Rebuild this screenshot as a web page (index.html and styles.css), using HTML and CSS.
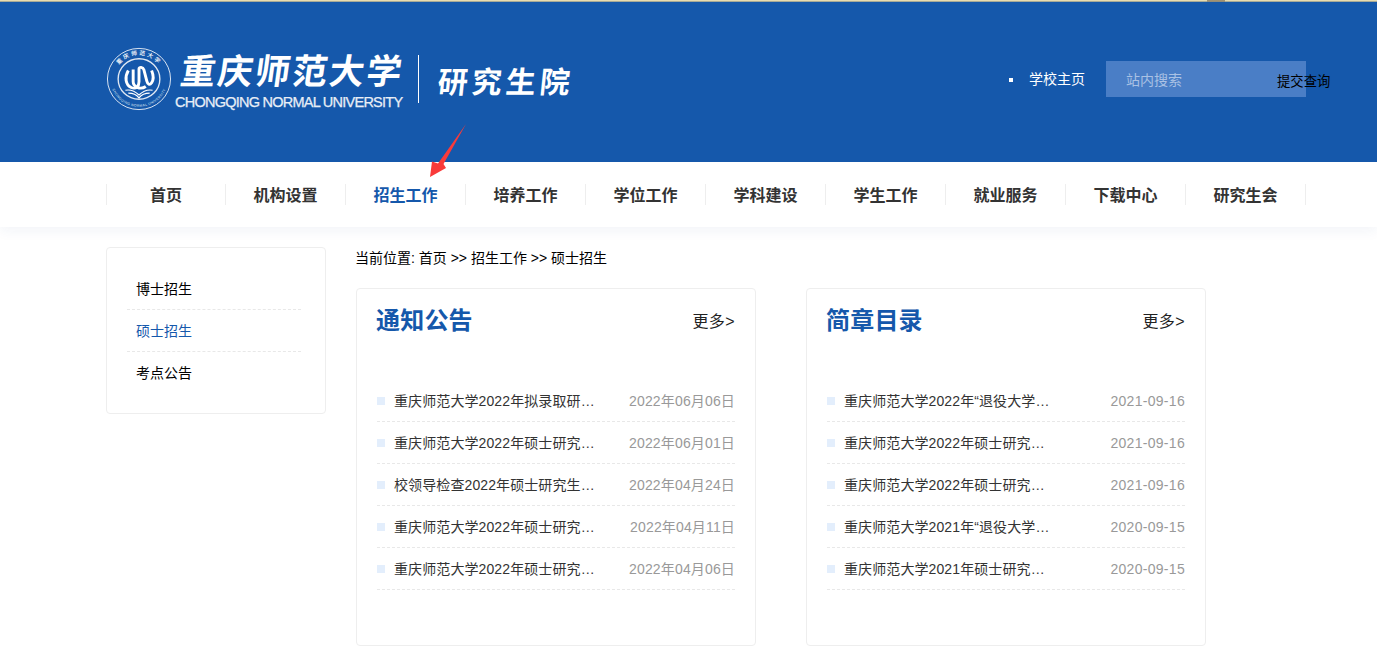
FILE: index.html
```html
<!DOCTYPE html>
<html lang="zh-CN">
<head>
<meta charset="utf-8">
<title>重庆师范大学研究生院</title>
<link rel="stylesheet" href="styles.css">
</head>
<body>
<header class="header">
  <div class="topstrip"></div>
  <div class="header-inner">
    <div class="logo">
      <svg class="seal" width="66" height="64" viewBox="0 0 68 68" preserveAspectRatio="none" fill="none" stroke="#dfe8f3">
        <defs>
          <path id="sealTop" d="M8.500 34a25.500 25.500 0 0 1 51 0"/>
          <path id="sealBottom" d="M4.500 34a29.500 29.500 0 0 0 59 0"/>
        </defs>
        <circle cx="34" cy="34" r="32.500" stroke-width="1"/>
        <circle cx="34" cy="34" r="21.500" stroke-width="1.400"/>
        <text class="seal-cn"><textPath href="#sealTop" startOffset="50%">重庆师范大学</textPath></text>
        <text class="seal-en"><textPath href="#sealBottom" startOffset="50%">CHONGQING NORMAL UNIVERSITY</textPath></text>
        <path d="M23 25c-4 7-3 15 3 18 5 2 8-1 8-6V23c0-2 4-2 5 1l3 12c1 4 3 5 5 2 2-3 2-8 0-13" stroke="#fff" stroke-width="3"/>
        <path d="M28 24v13c0 5 7 9 13 5" stroke="#fff" stroke-width="3"/>
        <path d="M20 46c5-1 10 1 14 5 4-4 9-6 14-5M23 49c4 0 8 1 11 5 3-4 7-5 11-5" stroke="#fff" stroke-width="1.200"/>
      </svg>
      <div class="logo-name">
        <div class="logo-cn">重庆师范大学</div>
        <div class="logo-en">CHONGQING NORMAL UNIVERSITY</div>
      </div>
      <div class="logo-rule"></div>
      <div class="logo-dept">研究生院</div>
    </div>
    <div class="tools">
      <span class="bullet"></span>
      <a class="home-link">学校主页</a>
      <form class="search">
        <span class="search-hint">站内搜索</span>
        <span class="search-btn">提交查询</span>
      </form>
    </div>
  </div>
  <svg class="arrow" width="38" height="54" viewBox="0 0 38 54"><path d="M37 0 L14.500 40 L17 44 L1 53 L3 37.500 L9 39.500 Z" fill="#f93a3a"/></svg>
</header>

<nav class="nav">
  <ul class="nav-list">
    <li class="nav-item">首页</li>
    <li class="nav-item">机构设置</li>
    <li class="nav-item active">招生工作</li>
    <li class="nav-item">培养工作</li>
    <li class="nav-item">学位工作</li>
    <li class="nav-item">学科建设</li>
    <li class="nav-item">学生工作</li>
    <li class="nav-item">就业服务</li>
    <li class="nav-item">下载中心</li>
    <li class="nav-item">研究生会</li>
  </ul>
</nav>

<main class="main">
  <aside class="side">
    <ul class="side-list">
      <li class="side-item">博士招生</li>
      <li class="side-item current">硕士招生</li>
      <li class="side-item last">考点公告</li>
    </ul>
  </aside>
  <section class="content">
    <div class="crumb">当前位置: 首页 &gt;&gt; 招生工作 &gt;&gt; 硕士招生</div>
    <div class="cards">
      <article class="card">
        <div class="card-head"><h2 class="card-title">通知公告</h2><a class="more">更多&gt;</a></div>
        <ul class="news">
          <li class="news-row"><span class="news-title">重庆师范大学2022年拟录取研究生名单公示</span><span class="news-date">2022年06月06日</span></li>
          <li class="news-row"><span class="news-title">重庆师范大学2022年硕士研究生招生复试公告</span><span class="news-date">2022年06月01日</span></li>
          <li class="news-row"><span class="news-title">校领导检查2022年硕士研究生招生复试工作</span><span class="news-date">2022年04月24日</span></li>
          <li class="news-row"><span class="news-title">重庆师范大学2022年硕士研究生招生复试公告</span><span class="news-date">2022年04月11日</span></li>
          <li class="news-row"><span class="news-title">重庆师范大学2022年硕士研究生招生复试公告</span><span class="news-date">2022年04月06日</span></li>
        </ul>
      </article>
      <article class="card">
        <div class="card-head"><h2 class="card-title">简章目录</h2><a class="more">更多&gt;</a></div>
        <ul class="news">
          <li class="news-row"><span class="news-title narrow">重庆师范大学2022年“退役大学生士兵”专项计划</span><span class="news-date numeric">2021-09-16</span></li>
          <li class="news-row"><span class="news-title narrow">重庆师范大学2022年硕士研究生招生简章</span><span class="news-date numeric">2021-09-16</span></li>
          <li class="news-row"><span class="news-title narrow">重庆师范大学2022年硕士研究生招生目录</span><span class="news-date numeric">2021-09-16</span></li>
          <li class="news-row"><span class="news-title narrow">重庆师范大学2021年“退役大学生士兵”专项计划</span><span class="news-date numeric">2020-09-15</span></li>
          <li class="news-row"><span class="news-title narrow">重庆师范大学2021年硕士研究生招生简章</span><span class="news-date numeric">2020-09-15</span></li>
        </ul>
      </article>
    </div>
  </section>
</main>
</body>
</html>
```
FILE: styles.css
```css
* { box-sizing: border-box; }
html, body { margin: 0; padding: 0; }
body {
  width: 1377px;
  height: 666px;
  overflow: hidden;
  background: #fff;
  color: #333;
  font-family: "Liberation Sans", "Noto Sans CJK SC", sans-serif;
  font-size: 14px;
}
ul { list-style: none; margin: 0; padding: 0; }
h2 { margin: 0; }

.header { position: relative; height: 162px; background: #1558ab; }
.topstrip {
  height: 2px;
  background:
    linear-gradient(#a8946c, #8a8a80) 1207px 0 / 18px 2px no-repeat,
    linear-gradient(#e8dcb0 50%, #a8ab98 50%);
}
.header-inner { display: flex; align-items: flex-start; justify-content: space-between; width: 1200px; margin-left: 106px; padding-top: 45px; }

.logo { display: flex; align-items: flex-start; color: #fff; }
.seal { flex: none; }
.seal-cn { fill: #e8eef6; stroke: none; font-family: "Noto Sans CJK SC", sans-serif; font-size: 6px; font-weight: 700; letter-spacing: 2px; text-anchor: middle; }
.seal-en { fill: #dfe8f3; stroke: none; font-family: "Liberation Sans", sans-serif; font-size: 3.500px; letter-spacing: .4px; text-anchor: middle; }
.logo-name { margin-left: 3px; margin-top: -1px; width: 228px; }
.logo-cn { font-family: "Noto Sans CJK SC", sans-serif; font-weight: 700; font-size: 35px; line-height: 45px; height: 48px; letter-spacing: 2.200px; margin-left: 6px; transform: skewX(-8deg); white-space: nowrap; }
.logo-en { font-size: 14.500px; line-height: 16px; letter-spacing: -.75px; color: #e8eef6; -webkit-text-stroke: .25px #e8eef6; white-space: nowrap; }
.logo-rule { width: 1px; height: 48px; margin: 8px 0 0 15px; background: #fff; }
.logo-dept { font-family: "Noto Sans CJK SC", sans-serif; font-weight: 700; font-size: 30px; line-height: 40px; letter-spacing: 4px; margin: 13px 0 0 19px; transform: skewX(-6deg); white-space: nowrap; }

.tools { display: flex; align-items: center; margin-top: 14px; }
.bullet { width: 4px; height: 4px; background: #fff; margin-top: 2px; margin-right: 16px; }
.home-link { color: #fff; font-size: 14px; line-height: 36px; margin-right: 21px; }
.search { position: relative; display: flex; align-items: center; width: 200px; height: 36px; padding-left: 20px; background: #4a7ec6; }
.search-hint { color: #a9c1e4; font-size: 14px; }
.search-btn { position: absolute; left: 171px; top: 13px; color: #000; font-size: 13.330px; line-height: 16px; white-space: nowrap; }

.arrow { position: absolute; left: 429px; top: 124px; z-index: 2; }

.nav { height: 65px; padding: 22px 0 0 106px; background: #fff; box-shadow: 0 4px 12px rgba(30, 70, 140, .06); }
.nav-list { display: flex; width: 1200px; height: 21px; }
.nav-item { width: 120px; border-right: 1px solid #eee; color: #333; font-size: 16px; font-weight: 700; line-height: 24px; text-align: center; }
.nav-item:first-child { border-left: 1px solid #eee; }
.nav-item.active { color: #1558ab; }

.main { display: flex; align-items: flex-start; padding: 20px 0 0 106px; }
.side { width: 220px; height: 167px; padding: 20px 24px 0 20px; background: #fff; border: 1px solid #eee; border-radius: 4px; }
.side-item { height: 42px; padding-left: 9px; border-bottom: 1px dashed #e8e8e8; color: #000; font-size: 14px; line-height: 43px; }
.side-item.current { color: #1558ab; }
.side-item.last { border-bottom: 0; }

.content { width: 850px; margin-left: 30px; }
.crumb { height: 21px; margin-left: -1px; color: #000; font-size: 14px; line-height: 23px; }
.cards { display: flex; gap: 50px; margin-top: 20px; }
.card { width: 400px; height: 358px; padding: 0 20px; background: #fff; border: 1px solid #eee; border-radius: 4px; }
.card-head { display: flex; align-items: flex-start; justify-content: space-between; height: 62px; }
.card-title { margin-left: -1px; color: #1558ab; font-size: 24px; font-weight: 700; letter-spacing: .2px; line-height: 64px; }
.more { color: #222; font-size: 16px; letter-spacing: .4px; line-height: 66px; }
.news { margin-top: 29px; }
.news-row { position: relative; display: flex; align-items: flex-start; justify-content: space-between; height: 42px; padding-left: 17px; border-bottom: 1px dashed #e8e8e8; }
.news-row::before { content: ""; position: absolute; left: 0; top: 17px; width: 8px; height: 8px; background: #e3eefc; }
.news-title { width: 201px; overflow: hidden; color: #333; font-size: 14px; letter-spacing: .1px; line-height: 43px; text-overflow: ellipsis; white-space: nowrap; }
.news-title.narrow { width: 206px; }
.news-date { color: #999; font-size: 14px; letter-spacing: .15px; line-height: 43px; white-space: nowrap; }
.news-date.numeric { letter-spacing: .3px; }
```
